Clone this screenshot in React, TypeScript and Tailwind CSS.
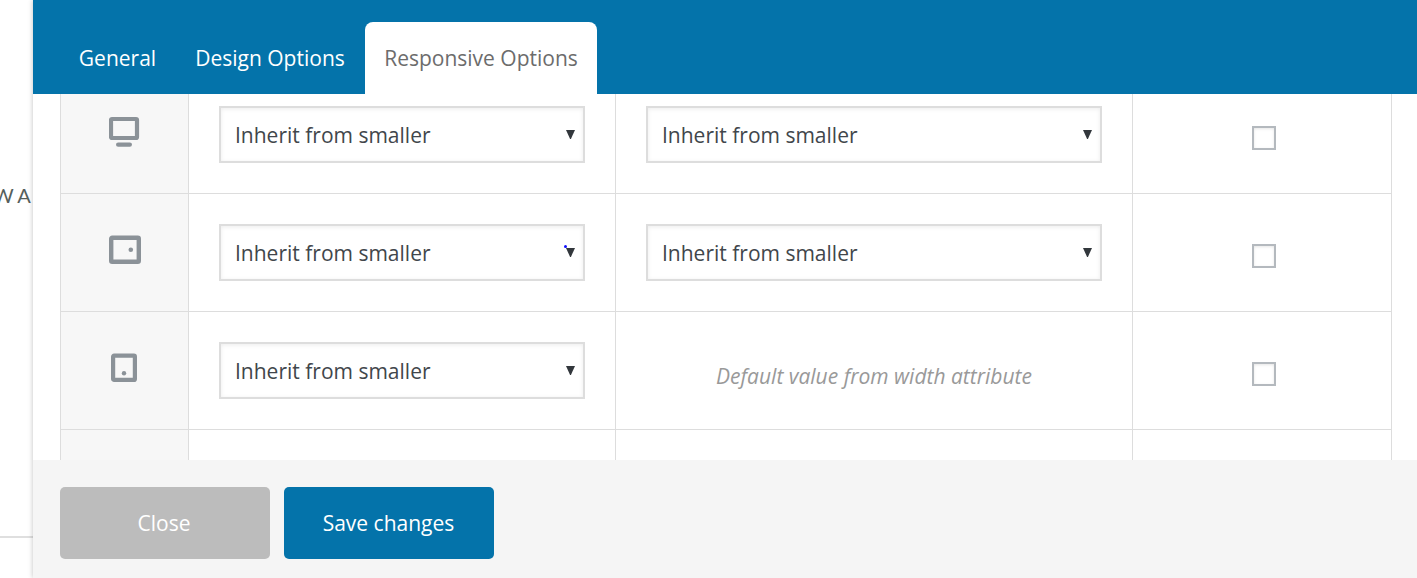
import type { ReactNode } from "react";

type Device = "desktop" | "landscape" | "portrait";

function DeviceIcon({ device }: { device: Device }) {
  return (
    <svg width="32" height="32" viewBox="0 0 32 32" fill="none" className="text-[#8b9298]">
      {device === "desktop" && (
        <>
          <rect x="2" y="3" width="26" height="19" rx="1" stroke="currentColor" strokeWidth="4.2" />
          <rect x="7" y="26.4" width="16" height="4.4" rx="2.2" fill="currentColor" />
        </>
      )}
      {device === "landscape" && (
        <>
          <rect x="2.2" y="3.8" width="27.6" height="24" rx="1" stroke="currentColor" strokeWidth="4.4" />
          <circle cx="21.8" cy="15.8" r="2.3" fill="currentColor" />
        </>
      )}
      {device === "portrait" && (
        <>
          <rect x="4.1" y="3.7" width="21.8" height="24.2" rx="1" stroke="currentColor" strokeWidth="4.2" />
          <circle cx="15" cy="21.3" r="2.2" fill="currentColor" />
        </>
      )}
    </svg>
  );
}

function Select({ marked = false }: { marked?: boolean }) {
  return (
    <div className="relative flex h-[57px] items-center justify-between border-2 border-[#dddddd] bg-white pr-2 pl-[14px] text-[#41464b] shadow-[inset_0_1px_4px_rgba(0,0,0,0.08)]">
      <span className="text-[21px] leading-[28px]">Inherit from smaller</span>
      <svg width="9" height="9" viewBox="0 0 9 9">
        <path d="M0 0h9L4.9 9h-.8z" fill="#32373c" />
      </svg>
      {marked && <i className="absolute top-[19px] left-[343px] size-[3px] rounded-full bg-[#1010ff]" />}
    </div>
  );
}

function Row({ icon, offset, size, check }: { icon?: ReactNode; offset?: ReactNode; size?: ReactNode; check?: boolean }) {
  return (
    <div className="grid h-[118px] grid-cols-[128px_427px_517px_259px] border-b border-[#dddddd]">
      <div className="border-r border-[#dddddd] bg-[#f7f7f7] pt-10 pl-12">{icon}</div>
      <div className="border-r border-[#dddddd] p-[30px]">{offset}</div>
      <div className="border-r border-[#dddddd] p-[30px]">{size}</div>
      <div className="flex justify-center border-r border-[#dddddd] pt-[50px] pl-[4px]">
        {check && (
          <div className="size-6 border-2 border-[#b4b9be] bg-white shadow-[inset_0_1px_3px_rgba(0,0,0,0.1)]" />
        )}
      </div>
    </div>
  );
}

export default function App() {
  return (
    <div className="flex h-[578px] w-[1417px] overflow-hidden bg-white font-['Open_Sans',sans-serif] whitespace-nowrap">
      <aside className="flex h-full w-[33px] shrink-0 flex-col overflow-hidden">
        <div className="h-[536px] pt-[181px]">
          <span className="-ml-[7px] block font-['Lato',sans-serif] text-[20px] leading-[28px] tracking-[4.5px] text-[#56605c]">WA</span>
        </div>
        <div className="h-[2px] bg-[#dfdfdf]" />
      </aside>
      <main className="relative flex h-full w-[1384px] flex-col bg-white shadow-[0_0_5px_rgba(0,0,0,0.25)]">
        <header className="flex h-[94px] shrink-0 items-end bg-[#0473aa] pl-[26px] text-[21px] leading-[28px] text-white">
          <div className="flex h-[72px] w-[117px] items-center justify-center">General</div>
          <div className="flex h-[72px] w-[189px] items-center justify-center pr-px">Design Options</div>
          <div className="flex h-[72px] w-[232px] items-center justify-center rounded-t-[8px] bg-white text-[#6c6c6c]">
            Responsive Options
          </div>
        </header>
        <section className="h-[366px] overflow-hidden pl-[27px]">
          <div className="-mt-[18px] w-[1332px] border-l border-[#dddddd]">
            <Row icon={<DeviceIcon device="desktop" />} offset={<Select />} size={<Select />} check />
            <Row icon={<DeviceIcon device="landscape" />} offset={<Select marked />} size={<Select />} check />
            <Row
              icon={<DeviceIcon device="portrait" />}
              offset={<Select />}
              size={
                <p className="pt-[20px] text-center text-[21px] leading-[28px] text-[#999999] italic">
                  Default value from width attribute
                </p>
              }
              check
            />
            <Row />
          </div>
        </section>
        <footer className="flex h-[118px] shrink-0 gap-[14px] bg-[#f5f5f5] pt-[27px] pl-[27px] text-[21px] leading-[28px] text-white">
          <button className="h-[72px] w-[210px] rounded-[5px] bg-[#bcbcbc] pr-[2px]">Close</button>
          <button className="h-[72px] w-[210px] rounded-[5px] bg-[#0473aa] pr-px">Save changes</button>
        </footer>
      </main>
    </div>
  );
}
